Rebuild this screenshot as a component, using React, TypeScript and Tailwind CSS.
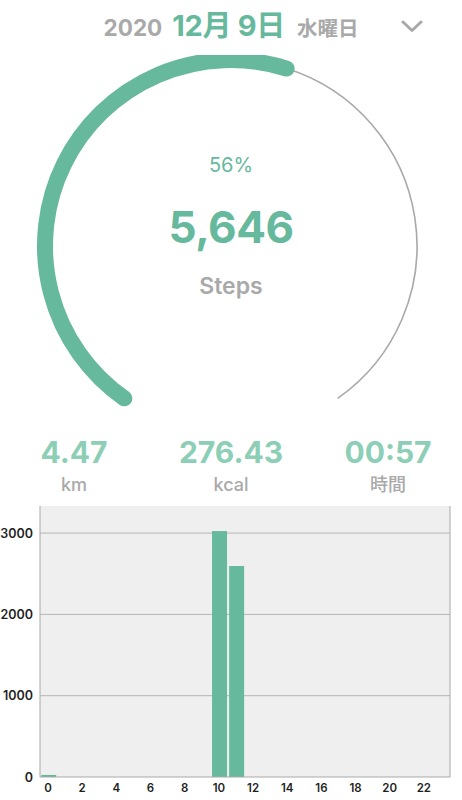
import React from "react";

const GREEN = "#66b99c";

function Ring() {
  const cx = 231;
  const cy = 191;
  const r = 186;
  const pt = (deg: number) => {
    const a = (deg * Math.PI) / 180;
    return [cx + r * Math.sin(a), cy - r * Math.cos(a)];
  };
  const start = -145;
  const end = 145;
  const pct = 0.56;
  const mid = start + (end - start) * pct;
  const [sx, sy] = pt(start);
  const [mx, my] = pt(mid);
  const [ex, ey] = pt(end);
  return (
    <svg className="absolute inset-0" width={462} height={370} viewBox="0 0 462 370">
      <path
        d={`M ${mx} ${my} A ${r} ${r} 0 0 1 ${ex} ${ey}`}
        fill="none"
        stroke="#a9a9a9"
        strokeWidth={1.6}
      />
      <path
        d={`M ${sx} ${sy} A ${r} ${r} 0 0 1 ${mx} ${my}`}
        fill="none"
        stroke={GREEN}
        strokeWidth={16}
        strokeLinecap="round"
      />
    </svg>
  );
}

function Chart() {
  const left = 40;
  const right = 450;
  const bottom = 271;
  const per = 81.3 / 1000;
  const slot = (right - left) / 24;
  const data: Record<number, number> = { 0: 25, 10: 3025, 11: 2595 };
  const grid = [1000, 2000, 3000];
  return (
    <svg width={462} height={294} viewBox="0 0 462 294" className="block">
      <rect x={left} y={0} width={right - left} height={bottom} fill="#efefef" />
      {grid.map((g) => (
        <line key={g} x1={left} x2={right} y1={bottom - g * per} y2={bottom - g * per} stroke="#b5b5b5" strokeWidth={1} />
      ))}
      {Object.entries(data).map(([h, v]) => {
        const x = left + Number(h) * slot + 1.2;
        const hgt = v * per;
        return <rect key={h} x={x} y={bottom - hgt} width={15} height={hgt} fill={GREEN} />;
      })}
      <line x1={left} x2={left} y1={0} y2={bottom} stroke="#a9a9a9" strokeWidth={1} />
      <line x1={right} x2={right} y1={0} y2={bottom} stroke="#a9a9a9" strokeWidth={1} />
      <line x1={left} x2={right} y1={bottom} y2={bottom} stroke="#a9a9a9" strokeWidth={1} />
      {[0, 1000, 2000, 3000].map((g) => (
        <text
          key={g}
          x={33}
          y={bottom - g * per + 4.5}
          textAnchor="end"
          fontSize={12.5}
          fontWeight={600}
          fill="#1f1f1f"
          fontFamily="Inter, 'Liberation Sans', sans-serif"
        >
          {g}
        </text>
      ))}
      {Array.from({ length: 12 }, (_, i) => i * 2).map((h) => (
        <text
          key={h}
          x={left + h * slot + slot / 2 - 0.5}
          y={bottom + 15}
          textAnchor="middle"
          fontSize={11.5}
          fontWeight={600}
          fill="#1f1f1f"
          fontFamily="Inter, 'Liberation Sans', sans-serif"
        >
          {h}
        </text>
      ))}
    </svg>
  );
}

export default function App() {
  return (
    <div
      className="w-[462px] h-[800px] bg-white overflow-hidden"
      style={{ fontFamily: "Inter, 'Noto Sans CJK JP', sans-serif" }}
    >
      <div className="relative h-[55px] flex items-start justify-center">
        <div className="flex items-baseline pt-[13px]">
          <span className="text-[22.5px] font-bold text-[#a9a9a9] leading-[26px]">2020</span>
          <span className="ml-[10px] text-[29px] font-bold text-[#66b99c] leading-[26px] tracking-[-0.3px]">12月 9日</span>
          <span className="ml-[12px] text-[20.5px] font-bold text-[#a9a9a9] leading-[26px]">水曜日</span>
        </div>
        <svg className="absolute left-[401px] top-[18px]" width={22} height={16} viewBox="0 0 22 16">
          <path d="M2 4 L11 12.5 L20 4" fill="none" stroke="#a9a9a9" strokeWidth={3} strokeLinecap="round" strokeLinejoin="round" />
        </svg>
      </div>
      <div className="relative h-[370px]">
        <Ring />
        <div className="relative flex flex-col items-center pt-[97px]">
          <div className="text-[20px] text-[#66b99c] leading-[26px]">56%</div>
          <div className="mt-[23px] text-[44px] font-bold text-[#66b99c] leading-[52px] tracking-[-0.5px]">5,646</div>
          <div className="mt-[18px] text-[23px] font-semibold text-[#a9a9a9] leading-[30px]">Steps</div>
        </div>
      </div>
      <div className="flex justify-center h-[81px]">
        {[
          ["4.47", "km"],
          ["276.43", "kcal"],
          ["00:57", "時間"],
        ].map(([v, l]) => (
          <div key={l} className="w-[157px] shrink-0 flex flex-col items-center pt-[9px]">
            <div className="text-[30px] font-bold text-[#8dcfb6] leading-[36px]">{v}</div>
            <div className="mt-[2px] text-[18px] font-medium text-[#a9a9a9] leading-[26px]">{l}</div>
          </div>
        ))}
      </div>
      <Chart />
    </div>
  );
}
